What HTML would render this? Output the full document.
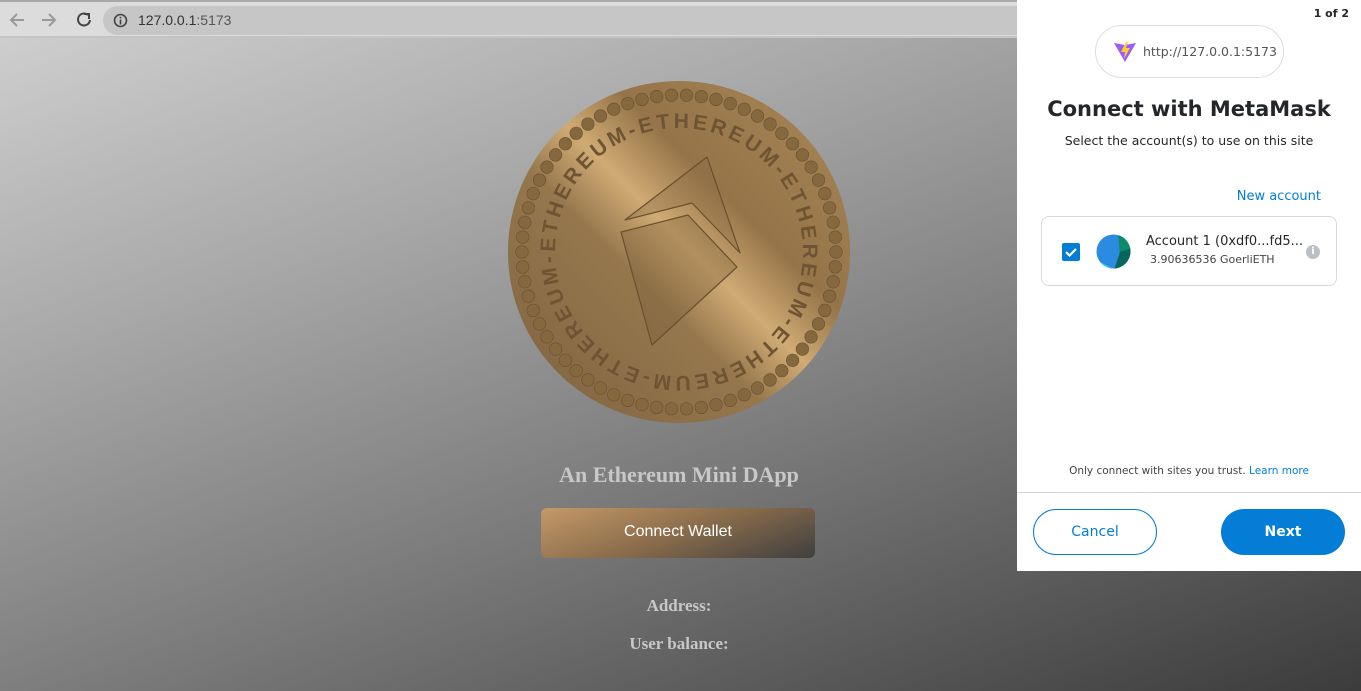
<!DOCTYPE html>
<html><head><meta charset="utf-8"><style>
*{margin:0;padding:0;box-sizing:border-box}
body{width:1361px;height:691px;overflow:hidden;position:relative;font-family:"Liberation Sans",sans-serif;background:linear-gradient(160deg,#d2d2d2 0%,#a9a9a9 30%,#7c7c7c 60%,#3c3c3c 100%)}
.bar{position:absolute;left:0;top:0;width:1361px;height:38px;background:#dcdcdc;border-top:2px solid #a8a8a8;border-bottom:2px solid #c4c4c4}
.url{position:absolute;left:103px;top:4px;width:1000px;height:29px;border-radius:15px;background:#c6c6c6;font-size:14px;color:#333;line-height:29px;padding-left:35px}
.serif{font-family:"Liberation Serif",serif;font-weight:bold;color:#c8c8c8;position:absolute;text-align:center;left:0;width:1358px}
.btn{position:absolute;left:541px;top:508px;width:274px;height:50px;border-radius:6px;background:linear-gradient(160deg,#c49968,#8a6c4b 50%,#3f3f3f);color:#fff;font-size:16px;text-align:center;line-height:48px}
.pop{position:absolute;left:1017px;top:0;width:344px;height:571px;background:#fff;color:#24272a}
.mm{font-family:"DejaVu Sans","Liberation Sans",sans-serif}
.pill{position:absolute;border-radius:30px}
</style></head><body>
<div class="bar">
<svg style="position:absolute;left:8px;top:8px" width="90" height="20" viewBox="0 0 90 20"><g fill="none" stroke-width="2"><path d="M16 10H3M9 4L3 10l6 6" stroke="#999"/><path d="M34 10h13M41 4l6 6-6 6" stroke="#999"/><path d="M80 5a6 6 0 1 0 2 5" stroke="#444"/><path d="M76 4h5v5" stroke="#444"/></g></svg>
<div class="url"><svg style="position:absolute;left:10px;top:7px" width="15" height="15"><circle cx="7.5" cy="7.5" r="6" fill="none" stroke="#444" stroke-width="1.6"/><rect x="6.7" y="6.5" width="1.6" height="5" fill="#444"/><rect x="6.7" y="3.8" width="1.6" height="1.6" fill="#444"/></svg>127.0.0.1<span style="color:#555">:5173</span></div>
</div>
<svg style="position:absolute;left:507px;top:80px" width="344" height="344" viewBox="0 0 344 344">
<defs>
<linearGradient id="g" x1="0" y1="1" x2="1" y2="0"><stop offset="0" stop-color="#7d6240"/><stop offset=".4" stop-color="#96774d"/><stop offset=".52" stop-color="#d0ab74"/><stop offset=".65" stop-color="#957449"/><stop offset="1" stop-color="#a98858"/></linearGradient>
<path id="cp" d="M172 172 m-124 0 a124 124 0 1 1 248 0 a124 124 0 1 1 -248 0"/>
</defs>
<circle cx="172" cy="172" r="171" fill="url(#g)"/>
<g fill="#86683f" stroke="#6a5030" stroke-width=".6" id="dots"></g>
<text font-family="Liberation Sans" font-weight="bold" font-size="21" fill="#6f5434"><textPath href="#cp" textLength="775" lengthAdjust="spacing">ETHEREUM-ETHEREUM-ETHEREUM-ETHEREUM-ETHEREUM-</textPath></text>
<g stroke="#6a5030" stroke-width="1.2" stroke-linejoin="round">
<path d="M200 77L118 140 185 123 233 173Z" fill="#8a6b44" fill-opacity=".35"/>
<path d="M114 152L181 135 230 187 145 265Z" fill="#7a5e3a" fill-opacity=".35"/>
</g>
</svg>
<div class="serif" style="top:462px;font-size:22px">An Ethereum Mini DApp</div>
<div class="btn">Connect Wallet</div>
<div class="serif" style="top:596px;font-size:17px">Address:</div>
<div class="serif" style="top:634px;font-size:17px">User balance:</div>
<div class="pop mm">
<div style="position:absolute;right:12px;top:7px;font-size:11px;font-weight:bold">1 of 2</div>
<div class="pill" style="left:78px;top:25px;width:189px;height:53px;border:1px solid #ddd;line-height:51px;font-size:12.5px;color:#555;padding-left:47px">http://127.0.0.1:5173
<svg style="position:absolute;left:17px;top:15px" width="24" height="22" viewBox="0 0 24 22"><path d="M1 2L12 21 23 2 12 4Z" fill="#9b5cf6"/><path d="M13 1L8 11h4l-1 7 6-11h-4l2-6Z" fill="#ffcc33"/></svg></div>
<div style="position:absolute;left:0;width:344px;top:97px;text-align:center;font-size:21px;font-weight:bold">Connect with MetaMask</div>
<div style="position:absolute;left:0;width:344px;top:133px;text-align:center;font-size:12.5px">Select the account(s) to use on this site</div>
<div style="position:absolute;right:40px;top:189px;font-size:13px;color:#037dd6">New account</div>
<div style="position:absolute;left:24px;top:216px;width:296px;height:70px;border:1px solid #d6d9dc;border-radius:8px">
<div style="position:absolute;left:20px;top:26px;width:18px;height:18px;background:#037dd6;border-radius:2px"><svg width="18" height="18"><path d="M4 9l3.5 3.5L14 6" stroke="#fff" stroke-width="2.2" fill="none"/></svg></div>
<svg style="position:absolute;left:54px;top:17px" width="35" height="35" viewBox="0 0 35 35"><defs><clipPath id="c"><circle cx="17.5" cy="17.5" r="17"/></clipPath></defs><g clip-path="url(#c)"><rect width="35" height="35" fill="#2a8be0"/><path d="M22 0h14v16l-12 6Z" fill="#0e8a6a"/><path d="M24 18l12-4v22H18Z" fill="#06665a"/><path d="M0 26l20 10H0Z" fill="#30c8f0"/></g></svg>
<div style="position:absolute;left:104px;top:17px;font-size:13px;white-space:nowrap">Account 1 (0xdf0...fd5...</div>
<div style="position:absolute;left:108px;top:36px;font-size:11px;color:#444">3.90636536 GoerliETH</div>
<div style="position:absolute;left:264px;top:28px;width:14px;height:14px;border-radius:7px;background:#bbc0c5;color:#fff;font-size:10px;text-align:center;line-height:14px;font-weight:bold">i</div>
</div>
<div style="position:absolute;left:0;width:344px;top:465px;text-align:center;font-size:10.5px;color:#444">Only connect with sites you trust. <span style="color:#037dd6">Learn more</span></div>
<div style="position:absolute;left:0;top:492px;width:344px;height:1px;background:#d6d9dc"></div>
<div class="pill" style="left:16px;top:509px;width:124px;height:46px;border:1px solid #037dd6;color:#037dd6;line-height:44px;font-size:14px;text-align:center">Cancel</div>
<div class="pill" style="left:204px;top:509px;width:124px;height:46px;background:#037dd6;color:#fff;line-height:46px;font-size:14px;font-weight:bold;text-align:center">Next</div>
</div>
<script>
var g=document.getElementById('dots'),s='';for(var i=0;i<66;i++){var a=i*Math.PI*2/66;s+='<circle cx="'+(172+157*Math.cos(a)).toFixed(1)+'" cy="'+(172+157*Math.sin(a)).toFixed(1)+'" r="6.3"/>';}g.innerHTML=s;
</script>
</body></html>
